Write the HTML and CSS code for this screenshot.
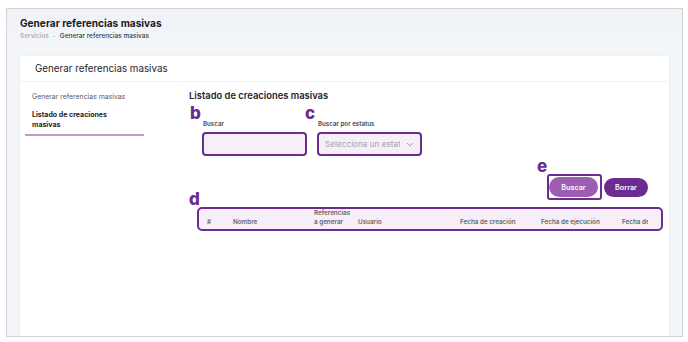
FILE: index.html
```html
<!DOCTYPE html>
<html lang="es">
<head>
<meta charset="utf-8">
<title>Generar referencias masivas</title>
<link rel="stylesheet" href="styles.css">
</head>
<body>
<div class="frame">
  <header class="page-head">
    <h1 class="page-title">Generar referencias masivas</h1>
    <div class="crumbs"><span class="crumb-muted">Servicios</span><span class="crumb-sep">-</span><span class="crumb-current">Generar referencias masivas</span></div>
  </header>
  <section class="card">
    <div class="card-head">Generar referencias masivas</div>
    <div class="card-body">
      <nav class="side">
        <a class="side-item">Generar referencias masivas</a>
        <a class="side-item active">Listado de creaciones masivas</a>
      </nav>
      <div class="panel">
        <h2 class="panel-title">Listado de creaciones masivas</h2>
        <div class="filters">
          <div class="field">
            <span class="mark">b</span>
            <label class="field-label">Buscar</label>
            <div class="input"></div>
          </div>
          <div class="field">
            <span class="mark">c</span>
            <label class="field-label">Buscar por estatus</label>
            <div class="input select"><span class="placeholder">Selecciona un estatus</span><svg class="chev" width="8" height="5" viewBox="0 0 8 5"><path d="M1 1l3 3 3-3" fill="none" stroke="#a9a3ad" stroke-width="1"/></svg></div>
          </div>
        </div>
        <div class="actions">
          <div class="btn-wrap">
            <span class="mark mark-e">e</span>
            <button class="btn btn-light">Buscar</button>
          </div>
          <button class="btn btn-dark">Borrar</button>
        </div>
        <div class="table-wrap">
          <span class="mark mark-d">d</span>
          <div class="thead">
            <span>#</span>
            <span>Nombre</span>
            <span>Referencias<br>a generar</span>
            <span>Usuario</span>
            <span>Fecha de creación</span>
            <span>Fecha de ejecución</span>
            <span class="clip">Fecha de cancelación</span>
          </div>
        </div>
      </div>
    </div>
  </section>
</div>
</body>
</html>
```

FILE: styles.css
```css
* { box-sizing: border-box; }
html, body { margin: 0; padding: 0; }
body {
  background: #ffffff;
  font-family: "Inter", "Noto Sans", sans-serif;
  color: #1f1d24;
  width: 688px;
  height: 342px;
  overflow: hidden;
}
.frame {
  margin: 8px 5px 0 6px;
  height: 329px;
  border: 1px solid #d3d3d5;
  background: linear-gradient(#eef1f5, #f3f6f9 30px);
  padding: 7px 13px 0 13px;
  overflow: hidden;
  display: flex;
  flex-direction: column;
}
.page-head { height: 40px; }
.page-title {
  margin: 0;
  font-size: 10.1px;
  font-weight: 700;
  color: #1c1b22;
  line-height: 15px;
}
.crumbs {
  margin-top: 1px;
  font-size: 6.5px;
  line-height: 9px;
  font-weight: 500;
}
.crumb-muted { color: #a8a8b0; }
.crumb-sep { color: #b8b8c0; margin: 0 4px; }
.crumb-current { color: #3c3a44; }
.card {
  flex: 1;
  background: #ffffff;
  box-shadow: 0 0 3px rgba(0,0,0,0.05);
  display: flex;
  flex-direction: column;
}
.card-head {
  height: 26px;
  padding: 7px 0 0 15px;
  font-size: 9.8px;
  color: #25232b;
  border-bottom: 1px solid #f1f1f3;
}
.card-body {
  flex: 1;
  display: flex;
  padding: 0 6px 0 5px;
}
.side {
  width: 160px;
  padding-top: 10px;
  display: flex;
  flex-direction: column;
}
.side-item {
  display: block;
  width: 119px;
  padding: 0 7px;
  font-size: 6.9px;
  line-height: 10px;
  color: #5b5a62;
}
.side-item.active {
  margin-top: 8px;
  font-size: 7px;
  font-weight: 700;
  color: #25232b;
  padding-right: 20px;
  padding-bottom: 4px;
  border-bottom: 2px solid #c29ad1;
}
.panel {
  flex: 1;
  padding: 8px 0 0 4px;
  box-shadow: -1px 0 2px rgba(0,0,0,0.015);
}
.panel-title {
  margin: 0;
  font-size: 9.4px;
  font-weight: 600;
  color: #25232b;
  line-height: 12px;
}
.filters {
  display: flex;
  gap: 10px;
  padding-left: 13px;
  margin-top: 18px;
}
.field { position: relative; width: 105px; }
.field-label {
  display: block;
  font-size: 6.2px;
  font-weight: 600;
  color: #4a4850;
  line-height: 8px;
  margin-left: 1px;
}
.input {
  margin-top: 4px;
  height: 24px;
  border: 2.5px solid #6c2b8f;
  border-radius: 4px;
  background: #f6eff9;
}
.select {
  display: flex;
  align-items: center;
  padding: 0 6px;
  overflow: hidden;
}
.placeholder {
  font-size: 8.2px;
  color: #a7a1ac;
  white-space: nowrap;
  overflow: hidden;
  width: 75px;
}
.chev { margin-left: 6px; flex: none; }
.mark {
  position: absolute;
  color: #6c2b8f;
  font-weight: 800;
  font-size: 17px;
  line-height: 14px;
  left: -12px;
  top: -14px;
}
.actions {
  display: flex;
  justify-content: flex-end;
  align-items: center;
  gap: 2px;
  margin-top: 18px;
  padding-right: 15px;
}
.btn-wrap {
  position: relative;
  display: flex;
  border: 2px solid #6c2b8f;
  border-radius: 3px;
  padding: 1px 2px 1px 0;
}
.mark-e { left: -12px; top: -17px; }
.btn {
  display: block;
  font-family: inherit;
  border: none;
  color: #ffffff;
  font-size: 7.2px;
  font-weight: 600;
  height: 20px;
  border-radius: 10px;
  padding: 0;
}
.btn-light { background: #9c5eb2; width: 49px; }
.btn-dark { background: #6c2b8f; width: 44px; height: 19px; }
.table-wrap {
  position: relative;
  margin-top: 7px;
  margin-left: 8px;
}
.mark-d { left: -8px; top: -15px; }
.thead {
  height: 24px;
  border: 2.5px solid #6c2b8f;
  border-radius: 5px;
  background: #f6eff9;
  display: grid;
  grid-template-columns: 26px 81px 44px 102px 81px 81px 1fr;
  align-items: end;
  padding: 0 0 4px 8px;
  font-size: 6.3px;
  font-weight: 600;
  color: #67656d;
  line-height: 9px;
  overflow: hidden;
}
.thead .clip { white-space: nowrap; overflow: hidden; width: 26px; }
```
